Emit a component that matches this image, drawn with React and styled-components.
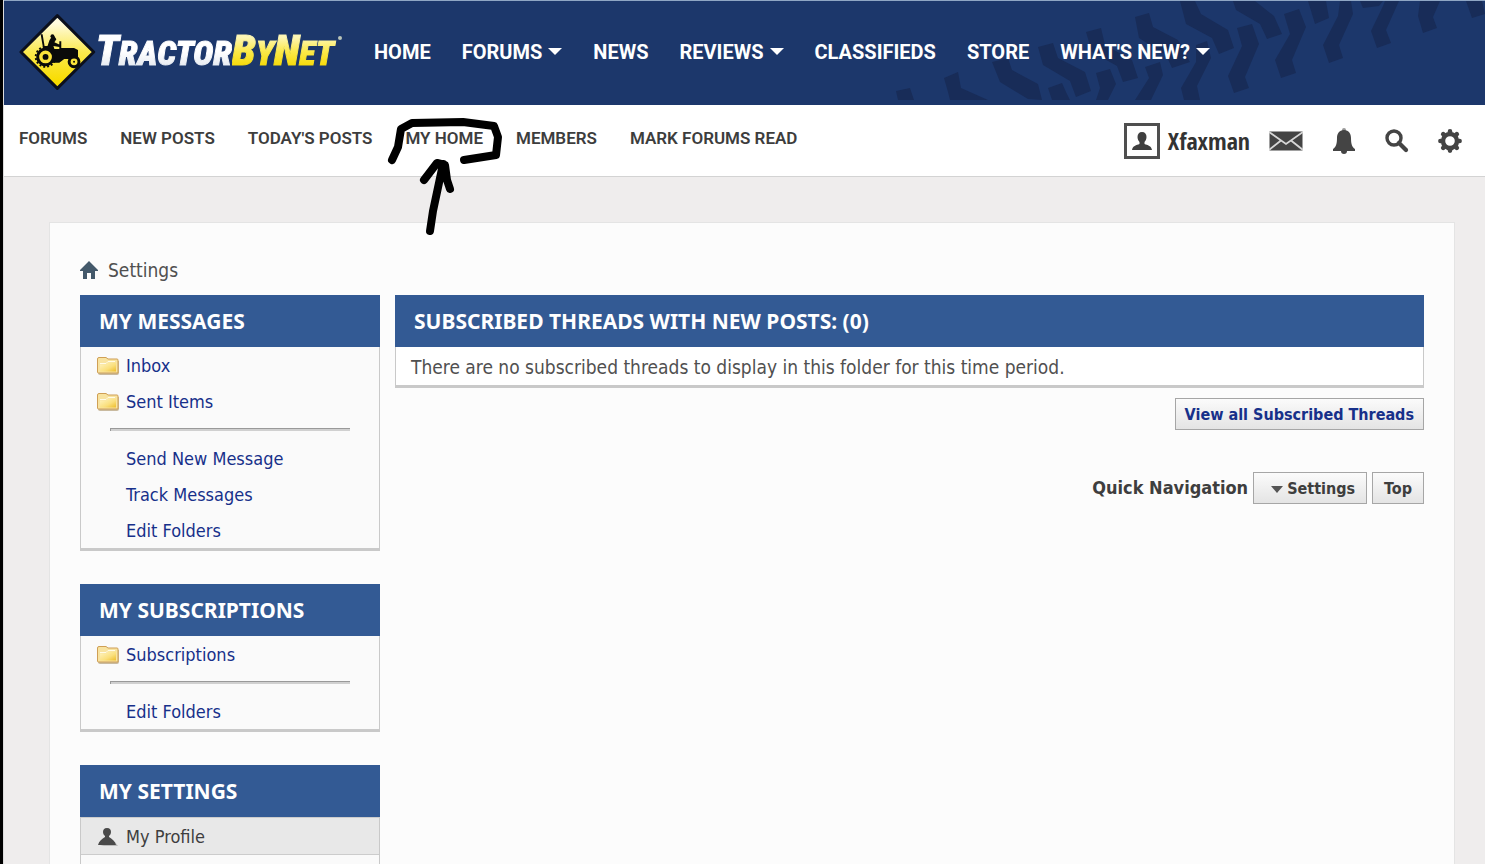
import React from 'react'
import styled, {createGlobalStyle, css} from 'styled-components'

const tahoma = "'DejaVu Sans Condensed', 'DejaVu Sans', sans-serif"
const navFont = "Roboto, 'Open Sans', sans-serif"

const GlobalStyle = createGlobalStyle`
    * { box-sizing: border-box; }
    body {
        margin : 0;
        background : #efeded;
        color : #3e3e3e;
        font-family : ${tahoma};
    }
    ul { list-style: none; margin: 0; padding: 0; }
    a { color: inherit; text-decoration: none; }
`
const Page = styled.div`
    border-left : 3px solid #000;
    box-shadow : inset 1px 0 0 #dcdcdc;
    padding-left : 1px;
    min-height : 100vh;
    overflow-x : hidden;
`
const Header = styled.header`
    position : relative;
    display : flex;
    align-items : center;
    gap : 32px;
    height : 105px;
    padding-left : 15px;
    padding-bottom : 3px;
    border-top : 1px solid #8fa6c4;
    background : #1c376b;
`
const Tread = styled.svg`
    position : absolute;
    right : 0;
    top : 0;
    width : 605px;
    height : 104px;
    fill : #182c58;
`
const Logo = styled.a`
    position : relative;
    display : flex;
    align-items : center;
    width : 323px;
    flex-shrink : 0;
`
const LogoText = styled.span`
    display : flex;
    align-items : baseline;
    font-family : 'Roboto Condensed', Roboto, sans-serif;
    font-weight : 900;
    font-style : italic;
    font-size : 34px;
    line-height : 44px;
`
const LogoWord = styled.span`
    padding-right : ${({$end}) => $end ? '4px' : '0'};
    background : ${({$yellow}) => $yellow
        ? 'linear-gradient(#fdf6b4 20%, #fbe94a 50%, #f5d800 85%)'
        : 'linear-gradient(#fff 50%, #dfe5ee 90%)'};
    background-clip : text;
    color : transparent;
    -webkit-text-stroke : 1px transparent;
`
const LogoBig = styled.span`
    font-size : 43px;
`
const Dot = styled.span`
    width : 4px;
    height : 4px;
    border-radius : 50%;
    background : #b9c3b8;
    align-self : flex-start;
    margin-top : 8px;
`
const MainNav = styled.ul`
    position : relative;
    display : flex;
    gap : 31px;
    color : #fff;
    font : 700 20px/24px ${navFont};
    white-space : nowrap;
    a {
        display : flex;
        align-items : center;
        gap : 6px;
    }
`
const Caret = styled.span`
    border : solid transparent;
    border-width : 7px 7px 0;
    border-top-color : #fff;
`
const SubBar = styled.div`
    display : flex;
    justify-content : space-between;
    align-items : center;
    height : 72px;
    padding : 0 23px 0 15px;
    background : #fff;
    border-bottom : 1px solid #d3d3d3;
`
const SubNav = styled.ul`
    display : flex;
    gap : 33px;
    padding-bottom : 5px;
    color : #3d3d3d;
    font : 600 17px/20px ${navFont};
    white-space : nowrap;
    li { position: relative; }
`
const Scribble = styled.svg`
    position : absolute;
    left : -20px;
    top : -15px;
    width : 120px;
    height : 130px;
    z-index : 2;
    pointer-events : none;
    fill : none;
    stroke : #000;
    stroke-width : 8;
    stroke-linecap : round;
    stroke-linejoin : round;
`
const Tools = styled.div`
    display : flex;
    align-items : center;
    color : #444;
`
const User = styled.a`
    display : flex;
    align-items : center;
    gap : 8px;
    margin-right : 19px;
    color : #333;
    font : 700 24px/32px 'Open Sans Condensed', 'Open Sans', sans-serif;
`
const ToolButtons = styled.div`
    display : flex;
    align-items : center;
    gap : 29px;
`
const IconButton = styled.button`
    display : flex;
    padding : 0;
    border : 0;
    background : none;
    color : inherit;
`
const Panel = styled.div`
    margin : 45px 30px 0 45px;
    padding : 33px 30px 60px;
    border : 1px solid #e4e4e4;
    background : #fcfcfc;
`
const Crumb = styled.nav`
    display : flex;
    align-items : center;
    gap : 10px;
    height : 28px;
    margin-bottom : 11px;
    color : #505050;
    font-size : 19px;
`
const Columns = styled.div`
    display : grid;
    grid-template-columns : 300px 1fr;
    column-gap : 15px;
    align-items : start;
`
const Side = styled.aside`
    display : flex;
    flex-direction : column;
    gap : 33px;
`
const Title = styled.h2`
    margin : 0;
    padding : 0 19px;
    background : #335a94;
    color : #fff;
    font : 700 21px/52px 'Noto Sans', sans-serif;
`
const Box = styled.div`
    padding-bottom : ${({$tail}) => $tail ? '36px' : '0'};
    border : solid #c9c9c9;
    border-width : 0 1px 3px;
    background : ${({$white}) => $white ? '#fff' : '#fafafa'};
`
const Rule = styled.hr`
    height : 3px;
    margin : 9px 29px;
    border : 1px solid #999;
    border-width : 1px 0 0 1px;
    background : #d0d0d0;
`
const Item = styled.a`
    display : flex;
    align-items : center;
    gap : 6px;
    height : 36px;
    padding-left : ${({$icon}) => $icon ? '15px' : '45px'};
    color : #17308a;
    font-size : 18px;
    ${({$active}) => $active && css`
        height : 38px;
        border : solid #ccc;
        border-width : 1px 0;
        background : #e8e8e8;
        color : #3e3e3e;
    `}
`
const Empty = styled.p`
    margin : 0;
    padding : 2px 15px 0;
    color : #505050;
    font-size : 19px;
    line-height : 36px;
`
const Actions = styled.div`
    display : flex;
    justify-content : flex-end;
    align-items : center;
    gap : 5px;
    margin-top : ${({$space}) => $space};
    font : 700 18px/20px ${tahoma};
`
const Button = styled.button`
    display : flex;
    align-items : center;
    gap : 4px;
    height : 32px;
    padding : 2px ${({$narrow}) => $narrow ? '9px' : '11px'} 0;
    border : 1px solid #a6a6a6;
    background : linear-gradient(#fbfbfb, #e4e4e4);
    color : ${({$link}) => $link ? '#17308a' : '#3e3e3e'};
    font : 700 16px/20px ${tahoma};
`
const SmallCaret = styled.span`
    margin-left : 6px;
    border : solid transparent;
    border-width : 7px 6px 0;
    border-top-color : #555;
`

const treads = [
    '896,91 910,88 914,100 898,100',
    '944,78 958,72 961,88 988,100 950,100 948,92',
    '992,62 1008,58 1012,70 1038,84 1042,100 1028,99 1000,82',
    '1038,47 1053,43 1058,58 1085,72 1091,91 1076,97 1070,81 1043,65',
    '1048,88 1062,83 1066,92 1070,100 1052,100',
    '1096,73 1110,69 1116,84 1108,100 1096,100 1100,88',
    '1086,32 1101,28 1105,45 1132,60 1138,78 1123,82 1117,66 1092,52',
    '1135,17 1149,13 1153,27 1178,40 1190,62 1172,68 1166,55 1139,38',
    '1180,1 1195,1 1201,14 1228,30 1234,48 1219,54 1212,38 1186,24',
    '1233,1 1255,1 1274,16 1282,34 1267,39 1260,24 1236,10',
    '1145,67 1160,62 1163,75 1151,100 1135,100 1149,78',
    '1196,45 1207,41 1211,58 1197,86 1200,100 1184,100 1181,88 1196,62',
    '1237,28 1252,24 1259,44 1245,77 1249,88 1234,93 1228,76 1242,46',
    '1284,14 1299,9 1306,27 1292,60 1296,73 1281,78 1275,60 1290,34',
    '1308,1 1326,1 1329,18 1315,24',
    '1340,1 1351,1 1353,14 1339,45 1343,58 1329,63 1323,45 1338,16',
    '1360,1 1383,1 1379,6 1363,8',
    '1385,1 1399,1 1386,30 1391,43 1377,48 1371,31 1383,6',
    '1420,1 1440,1 1433,17 1437,28 1423,33 1418,16',
    '1466,1 1482,1 1485,14 1472,18',
]

const TractorSign = () =>
    <svg width="78" height="78" viewBox="0 0 78 78" aria-hidden="true">
        <defs>
            <linearGradient id="sign" x1="0" y1="0" x2="0" y2="1">
                <stop offset="0.1" stopColor="#fffbe0"/>
                <stop offset="0.5" stopColor="#fbe94f"/>
                <stop offset="0.9" stopColor="#f8dc00"/>
            </linearGradient>
        </defs>
        <path d="M39 2 76 39 39 76 2 39Z" fill="url(#sign)" stroke="#0b0f1c" strokeWidth="3" strokeLinejoin="round"/>
        <g fill="#0a0a0a">
            <path d="M22 21h2l2 12h3l2-6 2-3 3-1 2 3-2 3 6 3-1 2-6-1 1 3h5V28h2v7h13l4 2v9H46l-5 4h-8l-8-12z"/>
            <circle cx="34" cy="23" r="2"/>
        </g>
        <circle cx="27" cy="44" r="8" fill="#fbe33a" stroke="#0a0a0a" strokeWidth="3"/>
        <circle cx="27" cy="44" r="10" fill="none" stroke="#0a0a0a" strokeWidth="2" strokeDasharray="2 2"/>
        <circle cx="27" cy="44" r="3" fill="#0a0a0a"/>
        <circle cx="56" cy="49" r="5" fill="#fbe33a" stroke="#0a0a0a" strokeWidth="3"/>
        <circle cx="56" cy="49" r="1" fill="#0a0a0a"/>
    </svg>

const Avatar = () =>
    <svg width="36" height="36" viewBox="0 0 36 36" aria-hidden="true">
        <rect x="1.5" y="1.5" width="33" height="33" fill="#fff" stroke="#4f4f4f" strokeWidth="3"/>
        <path d="M18 9c3 0 4.500 2 4.500 5 0 2-1 4-2 5v2c3 1 7 2 7.500 6H8c.5-4 4.500-5 7.500-6v-2c-1-1-2-3-2-5 0-3 1.500-5 4.500-5z" fill="#3f3f3f"/>
    </svg>

const Mail = () =>
    <svg width="34" height="20" viewBox="0 0 34 20" aria-hidden="true">
        <rect x="0.500" y="0.500" width="33" height="19" fill="currentColor"/>
        <path d="M0 1 17 13 34 1M0 19 12 9.500M34 19 22 9.500" fill="none" stroke="#d6d6d6" strokeWidth="1.800"/>
    </svg>

const Bell = () =>
    <svg width="24" height="28" viewBox="0 0 24 28" fill="currentColor" aria-hidden="true">
        <circle cx="12" cy="3" r="2" fill="#999"/>
        <path d="M12 3c5 0 7 4 7 8 0 6 1 9 4 11v2H1v-2c3-2 4-5 4-11 0-4 2-8 7-8z"/>
        <path d="M9 24h6c0 2-1 3-3 3s-3-1-3-3z"/>
    </svg>

const Search = () =>
    <svg width="24" height="24" viewBox="0 0 24 24" fill="none" stroke="currentColor" aria-hidden="true">
        <circle cx="9" cy="9" r="7" strokeWidth="3.400"/>
        <path d="m14 14 7 7" strokeWidth="4.200" strokeLinecap="round"/>
    </svg>

const Gear = () =>
    <svg width="24" height="24" viewBox="0 0 24 24" fill="none" stroke="currentColor" aria-hidden="true">
        <circle cx="12" cy="12" r="7" strokeWidth="4.400"/>
        {[0,45,90,135].map(deg =>
            <path key={deg} d="M12 2.400v2M12 19.600v2" strokeWidth="4.600" strokeLinecap="round" transform={`rotate(${deg} 12 12)`}/>)}
    </svg>

const Home = () =>
    <svg width="18" height="18" viewBox="0 0 18 18" fill="#44596b" aria-hidden="true">
        <path d="M9 0 18 9v1h-3v8h-4v-6H7v6H3v-8H0V9z"/>
    </svg>

const Folder = () =>
    <svg width="24" height="22" viewBox="0 0 24 20" aria-hidden="true">
        <defs>
            <linearGradient id="folder" x1="0" y1="0" x2="1" y2="1">
                <stop offset="0" stopColor="#fff5c4"/>
                <stop offset="0.600" stopColor="#fadf7c"/>
                <stop offset="1" stopColor="#edbd2c"/>
            </linearGradient>
        </defs>
        <path d="M2 5v13q0 2 2 2h17q2 0 2-2V6z" fill="#a98f62" opacity="0.600"/>
        <path d="M1.500 4q0-1.500 1.500-1.500h7L12 4h9q1 0 1 1v13H2.500q-1 0-1-1z" fill="#f8e3a0" stroke="#cf9f55"/>
        <path d="M4 9.500h6l2-2h8v9H4z" fill="url(#folder)"/>
        <path d="M4 8.500h6l2-2h7" fill="none" stroke="#fffbe6"/>
    </svg>

const Profile = () =>
    <svg width="24" height="22" viewBox="0 0 24 22" aria-hidden="true">
        <path d="M4 21h18l-3-4z" fill="#bbb"/>
        <path d="M11 3c3 0 4 2 4 4s-1 3-2 4v1c3 2 6 4 7 8H2c1-4 4-6 7-8v-1C8 10 7 9 7 7s1-4 4-4z" fill="#4a4a4a"/>
    </svg>

const mainLinks = [
    {name : 'HOME'},
    {name : 'FORUMS', menu : true},
    {name : 'NEWS'},
    {name : 'REVIEWS', menu : true},
    {name : 'CLASSIFIEDS'},
    {name : 'STORE'},
    {name : "WHAT'S NEW?", menu : true},
]
const subLinks = ['FORUMS', 'NEW POSTS', "TODAY'S POSTS", 'MY HOME', 'MEMBERS', 'MARK FORUMS READ']
const tools = [['Messages', Mail], ['Notifications', Bell], ['Search', Search], ['Options', Gear]]

const blocks = [
    {
        title : 'MY MESSAGES',
        top : ['Inbox', 'Sent Items'],
        bottom : ['Send New Message', 'Track Messages', 'Edit Folders'],
    },
    {
        title : 'MY SUBSCRIPTIONS',
        top : ['Subscriptions'],
        bottom : ['Edit Folders'],
    },
]

function SideBlock({block}){
    return (
        <section>
            <Title>{block.title}</Title>
            <Box>
                {block.top.map(name =>
                    <Item href="#" $icon key={name}><Folder/>{name}</Item>)}
                <Rule/>
                {block.bottom.map(name =>
                    <Item href="#" key={name}>{name}</Item>)}
            </Box>
        </section>
    )
}

function App(){
    return (
        <Page>
            <GlobalStyle/>
            <Header>
                <Tread viewBox="880 1 605 104" aria-hidden="true">
                    {treads.map(points => <polygon points={points} key={points}/>)}
                </Tread>
                <Logo href="#">
                    <TractorSign/>
                    <LogoText>
                        <LogoWord><LogoBig>T</LogoBig>RACTOR</LogoWord>
                        <LogoWord $yellow $end><LogoBig>B</LogoBig>Y<LogoBig>N</LogoBig>ET</LogoWord>
                        <Dot/>
                    </LogoText>
                </Logo>
                <MainNav>
                    {mainLinks.map(({name, menu}) =>
                        <li key={name}><a href="#">{name}{menu && <Caret/>}</a></li>)}
                </MainNav>
            </Header>
            <SubBar>
                <SubNav>
                    {subLinks.map(name =>
                        <li key={name}>
                            <a href="#">{name}</a>
                            {name === 'MY HOME' &&
                                <Scribble viewBox="385 113 120 130" aria-hidden="true">
                                    <path d="M392 160 398 147 401 129 412 123 463 122 494 126 498 137 496 155 464 160"/>
                                    <path d="M430 231 433 211 443 164M424 180 437 163 445 165 447 180 450 189"/>
                                </Scribble>}
                        </li>)}
                </SubNav>
                <Tools>
                    <User href="#"><Avatar/>Xfaxman</User>
                    <ToolButtons>
                        {tools.map(([label, Icon]) =>
                            <IconButton type="button" aria-label={label} key={label}><Icon/></IconButton>)}
                    </ToolButtons>
                </Tools>
            </SubBar>
            <Panel>
                <Crumb><Home/>Settings</Crumb>
                <Columns>
                    <Side>
                        {blocks.map(block => <SideBlock block={block} key={block.title}/>)}
                        <section>
                            <Title>MY SETTINGS</Title>
                            <Box $tail>
                                <Item href="#" $icon $active><Profile/>My Profile</Item>
                            </Box>
                        </section>
                    </Side>
                    <main>
                        <Title>SUBSCRIBED THREADS WITH NEW POSTS: (0)</Title>
                        <Box $white>
                            <Empty>There are no subscribed threads to display in this folder for this time period.</Empty>
                        </Box>
                        <Actions $space="10px">
                            <Button type="button" $link $narrow>View all Subscribed Threads</Button>
                        </Actions>
                        <Actions $space="42px">
                            <span>Quick Navigation</span>
                            <Button type="button"><SmallCaret/>Settings</Button>
                            <Button type="button">Top</Button>
                        </Actions>
                    </main>
                </Columns>
            </Panel>
        </Page>
    )
}

export default App
